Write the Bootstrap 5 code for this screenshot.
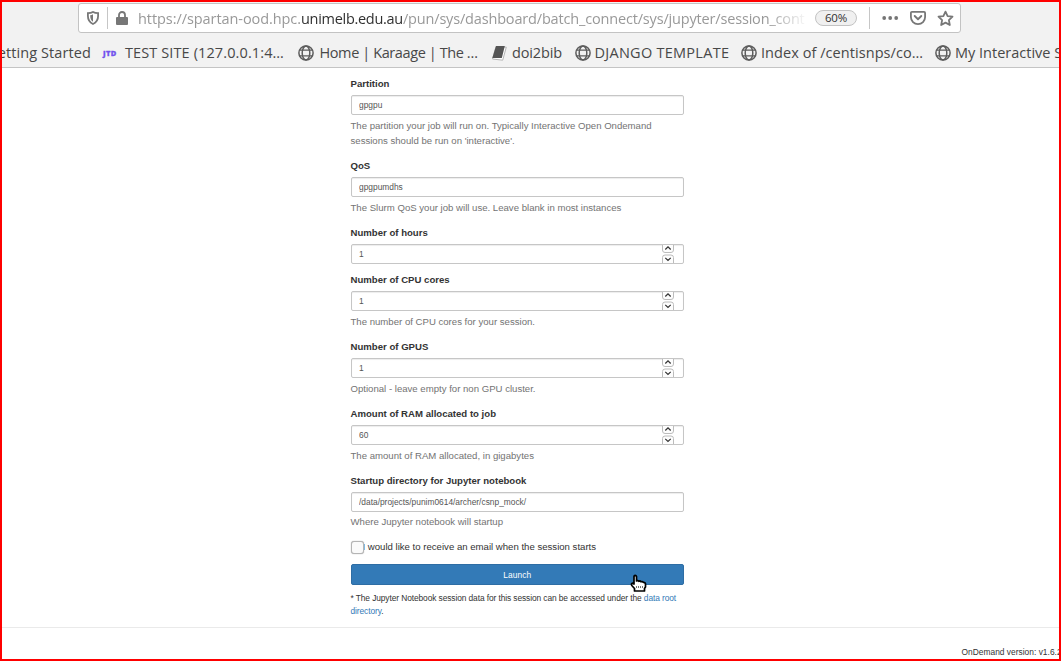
<!DOCTYPE html>
<html lang="en">
<head>
<meta charset="utf-8">
<meta name="viewport" content="width=device-width, initial-scale=1">
<title>Jupyter Notebook session</title>
<link href="https://cdn.jsdelivr.net/npm/bootstrap@5.3.0/dist/css/bootstrap.min.css" rel="stylesheet">
<style>
  body{font-family:"Liberation Sans",Arial,sans-serif;font-size:9.6px;line-height:15px;color:#333;background:#fff}
  .screen{width:1061px;height:661px}
  .frame-line{inset:0;border:2px solid #f00;pointer-events:none;z-index:10}
  .chrome{height:68px;background:#f2f2f2;border-bottom:1px solid #c4c4c4;font:14.5px/18px "Open Sans","Noto Sans",sans-serif;color:#484848}
  .urlbar{width:883px;height:30px;margin:3px 0 0 78px;background:#fff;border:1px solid #c3c3c3;border-radius:3px;color:#999}
  .urltext{width:670px;margin-left:10px;height:22px;line-height:23px;-webkit-mask-image:linear-gradient(90deg,#000 94%,transparent);mask-image:linear-gradient(90deg,#000 94%,transparent)}
  .host{color:#303030}
  .sep{width:1px;height:22px;background:#c6c6c6}
  .zoomlvl{width:42px;height:16px;margin-left:7px;border:1px solid #c3c3c3;border-radius:8px;background:#f0f0f0;font-size:11.5px;line-height:14px;color:#303030;letter-spacing:-.2px}
  .marks{height:24px;margin-top:8px;margin-left:-9px}
  .marks>div{flex:none;display:flex;align-items:center}
  .marks svg{flex:none}
  .jtd{width:18px;font:800 7.5px/18px "Open Sans",sans-serif;color:#7253ed;letter-spacing:.35px;-webkit-text-stroke:.3px #7253ed}
  .session{width:333.5px;margin-left:350.5px;padding-top:9.1px}
  .grp{height:66.9px}
  .grp.tall{height:82px}
  .grp.bare{height:47.4px}
  .grp label{display:block;height:17.7px;line-height:14px;font-weight:700}
  .field{height:20.4px;border:1px solid #c6c6c6;border-radius:2px;box-shadow:inset 0 1px 1px rgba(0,0,0,.075);overflow:hidden}
  .field input{width:100%;height:100%;border:0;background:transparent;outline:0;padding:0 7.5px;font-size:8.4px;color:#555;display:block}
  .hint{color:#737373;padding-top:2.4px}
  .spin{width:14px;height:19px;margin-top:-.6px;margin-right:8px;flex:none}
  .tick{left:.5px;top:2.6px;width:13px;height:13px;border:1px solid #b4b4b4;border-radius:3px;background:#fafafa;box-shadow:0 0 1px #999}
  .launch{height:21px;margin-top:10.5px;padding:1px 0 0;border-radius:2px;background:#337ab7;border:1px solid #2e6da4;color:#fff;font-size:8.4px;line-height:19px;letter-spacing:.1px}
  .launch:hover{background:#337ab7;color:#fff}
  .note{font-size:8.4px;line-height:12.5px;letter-spacing:-.092px;margin-top:7px}
  .note a{color:#337ab7;text-decoration:none}
  .hand{left:279px;top:10px}
  .foot{border-top:1px solid #eaeaea;margin-top:10px;padding-top:17px;font-size:8.4px;letter-spacing:.02px;padding-left:961.5px}
</style>
</head>
<body>
<svg width="0" height="0" class="position-absolute">
  <defs>
    <symbol id="globe" viewBox="0 0 16 16"><g fill="none" stroke="#5d5d5d" stroke-width="1.5"><circle cx="8" cy="8" r="7.1"/><ellipse cx="8" cy="8" rx="3.8" ry="7"/><path d="M1.7 5.2h12.6M1.7 10.8h12.6" stroke-width="1.3"/></g></symbol>
    <symbol id="spinner" viewBox="0 0 14 19"><g fill="#fdfdfd" stroke="#bcbcbc"><path d="M1.5-1V6q0 2.5 2.500 2.500h6q2.500 0 2.500-2.500V-1"/><path d="M1.5 20v-6.500q0-2.500 2.500-2.500h6q2.500 0 2.500 2.500V20"/></g><path d="M4.300 5.500 7 2.900l2.700 2.600M4.300 13.900 7 16.500l2.700-2.600" fill="none" stroke="#333" stroke-width="1.250"/></symbol>
  </defs>
</svg>
<div class="screen position-relative overflow-hidden">
  <header class="chrome overflow-hidden">
    <div class="urlbar d-flex align-items-center">
      <svg width="12" height="14" viewBox="0 0 12 14" style="margin-left:8px"><path d="M6 .9C4.400 1.900 2.700 2.200.9 2.200V5c0 4 1.800 6.500 5.100 8 3.300-1.500 5.100-4 5.100-8V2.200C9.300 2.200 7.600 1.900 6 .9z" fill="none" stroke="#777" stroke-width="1.800"/><path d="M6 3.300v7.500C4 9.500 3.200 7.700 3.200 4.300 4.300 4.200 5.200 3.900 6 3.300z" fill="#777"/></svg>
      <div class="sep" style="margin-left:8px"></div>
      <svg width="12" height="14" viewBox="0 0 12 14" style="margin-left:8px"><path d="M3 7V4a3 3 0 0 1 6 0v3" fill="none" stroke="#777" stroke-width="1.800"/><rect y="6" width="12" height="8" rx="1" fill="#777"/></svg>
      <div class="urltext text-nowrap overflow-hidden"><span style="letter-spacing:-.07px">https://spartan-ood.hpc.</span><span class="host" style="letter-spacing:-.29px">unimelb.edu.au</span><span style="letter-spacing:-.17px">/pun/sys/dashboard/batch_connect/sys/jupyter/session_cont</span></div>
      <div class="zoomlvl text-center">60%</div>
      <div class="sep" style="margin-left:12px"></div>
      <svg width="17" height="4" viewBox="0 0 17 4" style="margin-left:12px"><g fill="#757575"><circle cx="2.200" cy="2" r="1.900"/><circle cx="8.200" cy="2" r="1.900"/><circle cx="14.200" cy="2" r="1.900"/></g></svg>
      <svg width="16" height="14" viewBox="0 0 16 14" style="margin-left:11px"><path d="M2 .9h12q1.100 0 1.100 1.100v4a7.100 7.100 0 0 1-14.200 0V2Q.9.900 2 .9z" fill="none" stroke="#777" stroke-width="1.800"/><path d="M4.700 5 8 8.200 11.300 5" fill="none" stroke="#777" stroke-width="1.900" stroke-linecap="round" stroke-linejoin="round"/></svg>
      <svg width="17" height="17" viewBox="0 0 17 17" style="margin-left:11px"><path d="m8.500 1.600 2.100 4.500 4.900.6-3.600 3.400.9 4.900-4.300-2.400L4.200 15l.9-4.900L1.500 6.700l4.900-.6z" fill="none" stroke="#777" stroke-width="1.800" stroke-linejoin="round"/></svg>
    </div>
    <nav class="marks d-flex align-items-center text-nowrap">
      <div style="width:112px;letter-spacing:.09px;justify-content:end;padding-right:12px">Getting Started</div>
      <div style="width:195px"><span class="jtd">JTD</span><span style="margin-left:4px;letter-spacing:.11px">TEST SITE (127.0.0.1:4…</span></div>
      <div style="width:194px"><svg width="16" height="16"><use href="#globe"/></svg><span style="margin-left:5.500px;letter-spacing:-.4px">Home | Karaage | The …</span></div>
      <div style="width:83px"><svg width="15" height="16" viewBox="0 0 15 16"><path d="m4 1.500 10.300.7-3.600 13L.5 14z" fill="#fff" stroke="#b5b5b5"/><path d="M4 1h8.800l-3 12H.3z" fill="#555"/></svg><span style="margin-left:5px;letter-spacing:-.13px">doi2bib</span></div>
      <div style="width:166px"><svg width="16" height="16"><use href="#globe"/></svg><span style="margin-left:3.500px;letter-spacing:.27px">DJANGO TEMPLATE</span></div>
      <div style="width:194px"><svg width="16" height="16"><use href="#globe"/></svg><span style="margin-left:4px;letter-spacing:.06px">Index of /centisnps/co…</span></div>
      <div><svg width="16" height="16"><use href="#globe"/></svg><span style="margin-left:4px">My Interactive Sessions</span></div>
    </nav>
  </header>

  <main class="session">
    <div class="grp tall"><label for="f1">Partition</label><div class="field"><input id="f1" value="gpgpu"></div><div class="hint">The partition your job will run on. Typically Interactive Open Ondemand<br>sessions should be run on 'interactive'.</div></div>
    <div class="grp"><label for="f2">QoS</label><div class="field"><input id="f2" value="gpgpumdhs"></div><div class="hint">The Slurm QoS your job will use. Leave blank in most instances</div></div>
    <div class="grp bare"><label for="f3">Number of hours</label><div class="field d-flex"><input id="f3" value="1"><svg class="spin"><use href="#spinner"/></svg></div></div>
    <div class="grp"><label for="f4">Number of CPU cores</label><div class="field d-flex"><input id="f4" value="1"><svg class="spin"><use href="#spinner"/></svg></div><div class="hint">The number of CPU cores for your session.</div></div>
    <div class="grp"><label for="f5">Number of GPUS</label><div class="field d-flex"><input id="f5" value="1"><svg class="spin"><use href="#spinner"/></svg></div><div class="hint">Optional - leave empty for non GPU cluster.</div></div>
    <div class="grp"><label for="f6">Amount of RAM allocated to job</label><div class="field d-flex"><input id="f6" value="60"><svg class="spin"><use href="#spinner"/></svg></div><div class="hint">The amount of RAM allocated, in gigabytes</div></div>
    <div class="grp" style="height:64.500px"><label for="f7">Startup directory for Jupyter notebook</label><div class="field"><input id="f7" value="/data/projects/punim0614/archer/csnp_mock/"></div><div class="hint" style="padding-top:1.700px">Where Jupyter notebook will startup</div></div>
    <div class="position-relative" style="padding-left:12px">I would like to receive an email when the session starts<span class="tick position-absolute"></span></div>
    <div class="position-relative">
      <button class="btn launch w-100 d-block">Launch</button>
      <svg class="hand position-absolute" width="18" height="18" viewBox="0 0 18 18"><path d="M4.500 1.500q1.500-.5 2 1V7q1.200-.8 2.200.3 1.300-.8 2.300.5 1.500-.7 2.300.6 1.900-.3 2.200 1.600v3l-1 1.500V17h-10v-2.500L1.800 11.500Q.8 9.500 2.700 9.200L4 10V2.500z" fill="#fff" stroke="#000" stroke-width="1.700" stroke-linejoin="round"/><path d="M6.500 12v2M8.500 12v2M10.500 12v2M12.500 12v2" stroke="#777"/></svg>
    </div>
    <p class="note mb-0">* The Jupyter Notebook session data for this session can be accessed under the <a href="#">data root<br>directory</a>.</p>
  </main>
  <footer class="foot text-nowrap">OnDemand version: v1.6.20</footer>
  <div class="frame-line position-absolute"></div>
</div>
</body>
</html>
